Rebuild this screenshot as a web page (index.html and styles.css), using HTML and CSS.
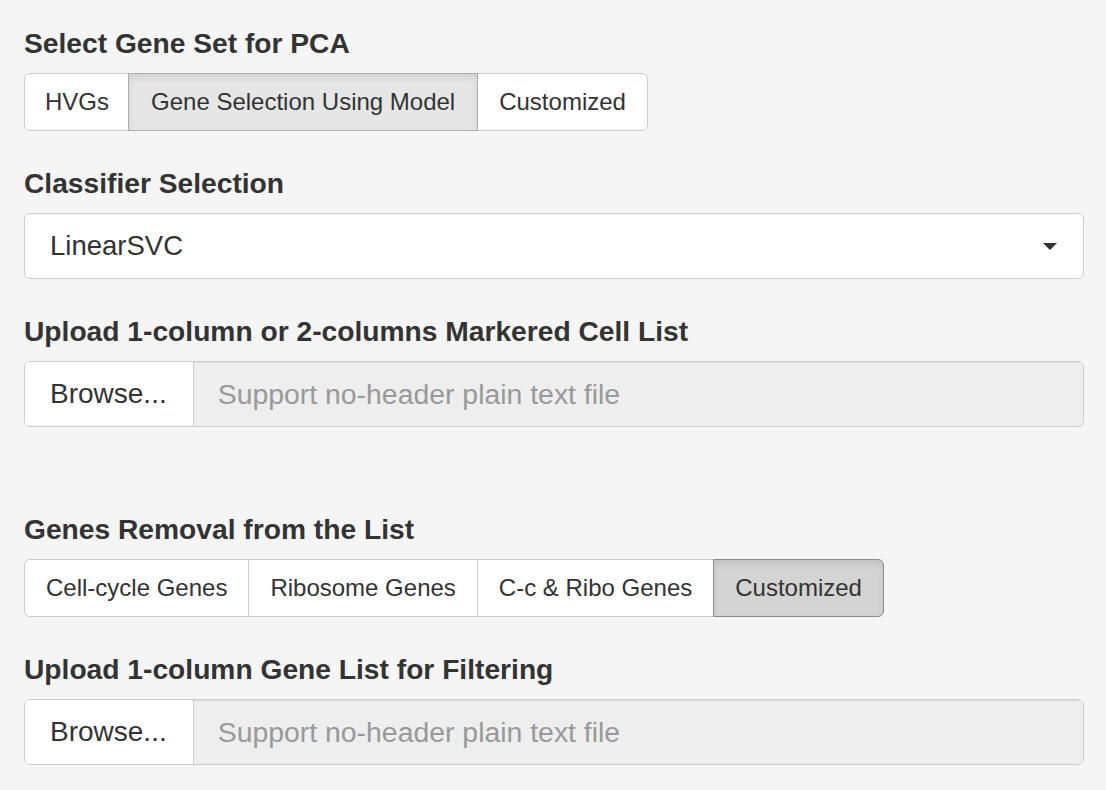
FILE: index.html
```html
<!DOCTYPE html>
<html>
<head>
<meta charset="utf-8">
<link rel="stylesheet" href="styles.css">
</head>
<body>
<div class="panel">
  <div class="form-group">
    <div class="label">Select Gene Set for PCA</div>
    <div class="btn-group">
      <span class="btn tight">HVGs</span>
      <span class="btn wide active">Gene Selection Using Model</span>
      <span class="btn">Customized</span>
    </div>
  </div>

  <div class="form-group">
    <div class="label">Classifier Selection</div>
    <div class="select">
      <span class="select-text">LinearSVC</span>
      <span class="caret"></span>
    </div>
  </div>

  <div class="form-group file-group">
    <div class="label">Upload 1-column or 2-columns Markered Cell List</div>
    <div class="file-input">
      <span class="browse">Browse...</span>
      <span class="file-text">Support no-header plain text file</span>
    </div>
  </div>

  <div class="form-group">
    <div class="label">Genes Removal from the List</div>
    <div class="btn-group">
      <span class="btn">Cell-cycle Genes</span>
      <span class="btn">Ribosome Genes</span>
      <span class="btn">C-c &amp; Ribo Genes</span>
      <span class="btn active dark">Customized</span>
    </div>
  </div>

  <div class="form-group">
    <div class="label">Upload 1-column Gene List for Filtering</div>
    <div class="file-input">
      <span class="browse">Browse...</span>
      <span class="file-text">Support no-header plain text file</span>
    </div>
  </div>
</div>
</body>
</html>
```

FILE: styles.css
```css
html, body {
  margin: 0;
  padding: 0;
  background: #f5f5f5;
}

body {
  font-family: "Liberation Sans", Arial, sans-serif;
  color: #333;
}

.panel {
  padding: 26px 22px 0 24px;
  display: flex;
  flex-direction: column;
}

.form-group {
  display: flex;
  flex-direction: column;
  align-items: flex-start;
  margin-bottom: 35px;
}

.file-group {
  margin-bottom: 85px;
}

.label {
  font-weight: bold;
  font-size: 28.2px;
  line-height: 34px;
  margin-bottom: 13px;
  color: #333;
}

.btn-group {
  display: flex;
}

.btn {
  font-size: 24px;
  line-height: 34px;
  padding: 11px 21px;
  background: #fff;
  border: 1px solid #ccc;
  color: #333;
  white-space: nowrap;
}

.btn.tight {
  padding-left: 20px;
  padding-right: 19px;
}

.btn.wide {
  padding-left: 22px;
  padding-right: 22px;
}

.btn + .btn {
  margin-left: -1px;
}

.btn:first-child {
  border-radius: 6px 0 0 6px;
}

.btn:last-child {
  border-radius: 0 6px 6px 0;
}

.btn.active {
  background: #e6e6e6;
  border-color: #adadad;
  box-shadow: inset 0 4px 7px rgba(0, 0, 0, 0.09);
  position: relative;
}

.btn.active.dark {
  background: #d4d4d4;
  border-color: #8c8c8c;
}

.select {
  align-self: stretch;
  display: flex;
  align-items: center;
  justify-content: space-between;
  height: 66px;
  box-sizing: border-box;
  padding: 0 26px 0 25px;
  background: #fff;
  border: 1px solid #ccc;
  border-radius: 6px;
  font-size: 27.5px;
  color: #333;
}

.caret {
  width: 0;
  height: 0;
  border-left: 7px solid transparent;
  border-right: 7px solid transparent;
  border-top: 7px solid #333;
}

.file-input {
  align-self: stretch;
  display: flex;
  height: 66px;
  box-sizing: border-box;
  border: 1px solid #ccc;
  border-radius: 6px;
  overflow: hidden;
  font-size: 28px;
}

.browse {
  background: #fff;
  color: #333;
  padding: 0 26px 0 25px;
  display: flex;
  align-items: center;
  border-right: 1px solid #ccc;
  white-space: nowrap;
}

.file-text {
  flex: 1;
  background: #eee;
  color: #999;
  padding: 0 0 0 24px;
  display: flex;
  align-items: center;
  font-size: 28.4px;
  box-shadow: inset 0 1px 1px rgba(0, 0, 0, 0.075);
  white-space: nowrap;
}
```
